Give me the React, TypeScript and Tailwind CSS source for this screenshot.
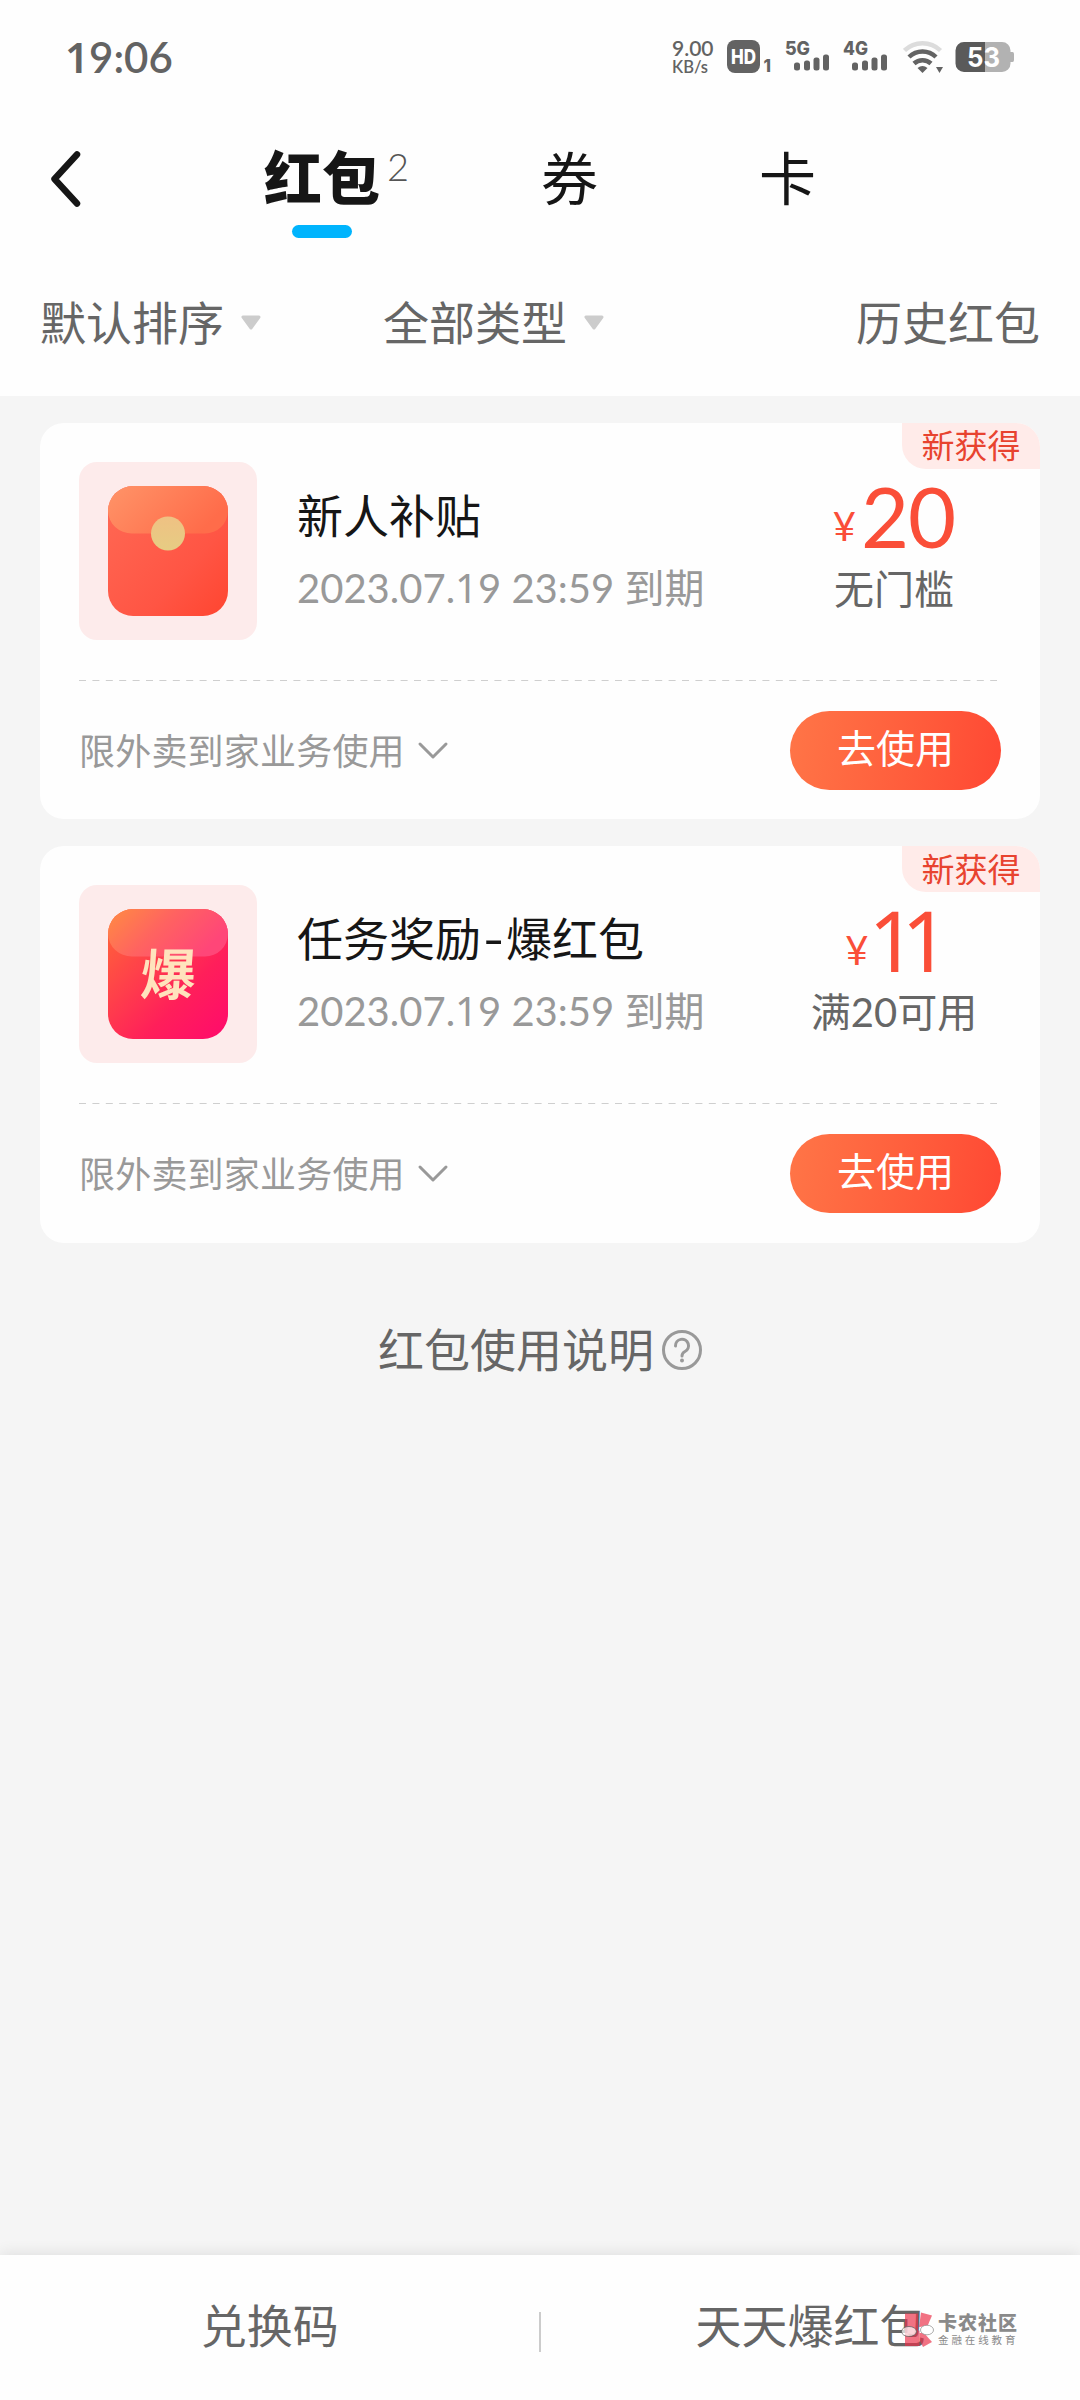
import { Fragment, type ReactNode } from "react";

type Coupon = {
  id: number;
  kind: "normal" | "burst";
  title: string;
  expires: string;
  amount: string;
  condition: string;
  scope: string;
};

const coupons: Coupon[] = [
  {
    id: 1,
    kind: "normal",
    title: "新人补贴",
    expires: "2023.07.19 23:59 到期",
    amount: "20",
    condition: "无门槛",
    scope: "限外卖到家业务使用",
  },
  {
    id: 2,
    kind: "burst",
    title: "任务奖励-爆红包",
    expires: "2023.07.19 23:59 到期",
    amount: "11",
    condition: "满20可用",
    scope: "限外卖到家业务使用",
  },
];

// Lato's "1" has a foot, so the ones are set in Noto Sans
function Digits({ text }: { text: string }) {
  const parts = text.split("1");
  return (
    <>
      {parts.map((part, i) => (
        <Fragment key={i}>
          {i > 0 ? <span className="font-['Noto_Sans']">1</span> : null}
          {part}
        </Fragment>
      ))}
    </>
  );
}

function Signal({ label }: { label: string }) {
  return (
    <svg className="overflow-visible" width="46" height="34" viewBox="0 0 46 34" fill="#636363">
      <text x="-1" y="15" fontSize="18.500" fontWeight="800" fontFamily="Inter" textLength="25" lengthAdjust="spacingAndGlyphs">
        {label}
      </text>
      <rect x="8" y="22.500" width="6" height="8" rx="2.500" />
      <rect x="18" y="20.500" width="6" height="10" rx="2.500" />
      <rect x="27.500" y="17.500" width="6" height="13" rx="2.500" />
      <rect x="37" y="14.500" width="6" height="16" rx="2.500" />
    </svg>
  );
}

function StatusBar() {
  return (
    <div className="flex h-[114px] items-center justify-between px-[65px] text-[#636363]">
      <span className="text-[42px] font-semibold leading-[50px]">
        <Digits text="19:06" />
      </span>
      <div className="flex items-center">
        <div className="flex w-[55px] flex-col">
          <span className="text-[21px] font-semibold leading-[20px]">9.00</span>
          <span className="text-[16.500px] font-semibold leading-[18px]">KB/s</span>
        </div>
        <svg className="mr-[15px] overflow-visible" width="44" height="34" viewBox="0 0 44 34" fill="#636363">
          <rect x="0" y="0" width="33" height="33" rx="8" />
          <text x="4" y="24" fontSize="20" fontWeight="800" fontFamily="Inter" fill="#fff" textLength="25" lengthAdjust="spacingAndGlyphs">
            HD
          </text>
          <text x="36.500" y="32" fontSize="17" fontWeight="800" fontFamily="Inter">
            1
          </text>
        </svg>
        <div className="mr-[12px]">
          <Signal label="5G" />
        </div>
        <div className="mr-[13px]">
          <Signal label="4G" />
        </div>
        <svg className="mr-[12px]" width="40" height="34" viewBox="0 0 40 34" fill="none" strokeWidth="4.500">
          <path d="M1.500 10.500a26 26 0 0 1 36 0" stroke="#dcdcdc" />
          <path d="M6 17a19.500 19.500 0 0 1 27 0" stroke="#636363" />
          <path d="M11 23.500a12.500 12.500 0 0 1 17 0" stroke="#636363" />
          <path d="M14.500 28q5-4 10 0l-5 5z" fill="#636363" />
          <path d="M33 27h7l-3.500 6z" fill="#636363" />
        </svg>
        <svg width="60" height="32" viewBox="0 0 60 32">
          <path d="M9 1h21v30H9a8.500 8.500 0 0 1-8.500-8.500v-13A8.500 8.500 0 0 1 9 1z" fill="#5a5a5a" />
          <path d="M30 1h17a8.500 8.500 0 0 1 8.500 8.500v1.500h2q1.500 0 1.500 2v6q0 2-1.500 2h-2v1.500A8.500 8.500 0 0 1 47 31H30z" fill="#b2b2b2" />
          <text x="12" y="26" fontSize="27" fontWeight="700" fontFamily="Inter" fill="#fff" textLength="33" lengthAdjust="spacingAndGlyphs">
            53
          </text>
        </svg>
      </div>
    </div>
  );
}

function Header() {
  return (
    <header className="flex h-[136px] pl-[48px] text-[57px] leading-none text-[#161616]">
      <button className="mt-[35px] h-[60px] w-[36px]">
        <svg width="36" height="60" viewBox="0 0 36 60" fill="none" stroke="#161616" strokeWidth="6.500" strokeLinecap="round" strokeLinejoin="round">
          <path d="M29 5.500L6.500 30 29 54.500" />
        </svg>
      </button>
      <div className="ml-[180px] mt-[34px] w-[116px]">
        <div className="relative text-[58px] font-black leading-[60px]">
          红包
          <span className="absolute left-[123px] top-[-12px] text-[38px] font-light leading-[60px] text-[#555]">2</span>
        </div>
        <div className="mx-auto mt-[17px] h-[13px] w-[60px] rounded-full bg-[#00b4fd]" />
      </div>
      <span className="ml-[161px] mt-[34px] leading-[60px]">券</span>
      <span className="ml-[161px] mt-[34px] leading-[60px]">卡</span>
    </header>
  );
}

function Caret() {
  return (
    <svg className="ml-[17px]" width="20" height="16" viewBox="0 0 20 16" fill="#ccc" stroke="#ccc" strokeWidth="3" strokeLinejoin="round">
      <path d="M2 2h16L10 13z" />
    </svg>
  );
}

function Filters() {
  return (
    <div className="flex h-[146px] items-center justify-between px-[40px] text-[46px] leading-none text-[#666]">
      <div className="flex items-center">
        <button className="flex items-center">
          默认排序
          <Caret />
        </button>
        <button className="ml-[122px] flex items-center">
          全部类型
          <Caret />
        </button>
      </div>
      <button>历史红包</button>
    </div>
  );
}

function EnvelopeIcon({ kind }: { kind: Coupon["kind"] }) {
  const burst = kind === "burst";
  return (
    <div className="flex h-[178px] w-[178px] shrink-0 items-center justify-center rounded-[18px] bg-[#fdebeb]">
      <svg width="120" height="130" viewBox="0 0 120 130">
        <defs>
          <linearGradient id={`body-${kind}`} x1="0" y1="0" x2="1" y2="1">
            <stop offset="0" stopColor={burst ? "#ff6a36" : "#ff6a55"} />
            <stop offset="0.65" stopColor={burst ? "#ff1f5a" : "#ff5544"} />
            <stop offset="1" stopColor={burst ? "#ff0a6c" : "#ff4530"} />
          </linearGradient>
          <linearGradient id={`flap-${kind}`} x1="0" y1="0" x2="1" y2="0.4">
            <stop offset="0" stopColor={burst ? "#ff8c42" : "#ff9468"} />
            <stop offset="0.5" stopColor={burst ? "#ff6360" : "#ff8059"} />
            <stop offset="1" stopColor={burst ? "#ff4678" : "#ff6c4a"} />
          </linearGradient>
          <linearGradient id="coin" x1="0" y1="0" x2="0" y2="1">
            <stop offset="0" stopColor="#efc183" />
            <stop offset="1" stopColor="#e6cc83" />
          </linearGradient>
        </defs>
        <rect width="120" height="130" rx="25" fill={`url(#body-${kind})`} />
        <path d="M0 25A25 25 0 0 1 25 0H95a25 25 0 0 1 25 25A23 23 0 0 1 97 47.500H24A24 23 0 0 1 0 25z" fill={`url(#flap-${kind})`} />
        {burst ? (
          <text
            x="60"
            y="86"
            fontSize="55"
            fontWeight="700"
            fill="#ffe3bd"
            textAnchor="middle"
            transform="skewX(-4) translate(5 0)"
          >
            爆
          </text>
        ) : (
          <circle cx="60" cy="47.500" r="17" fill="url(#coin)" />
        )}
      </svg>
    </div>
  );
}

function CouponTitle({ title }: { title: string }) {
  const [head, tail] = title.split("-");
  return (
    <h2 className="mt-[29px] text-[46px] leading-[50px] text-[#161616]">
      {head}
      {tail ? (
        <>
          <span className="inline-block w-[25px] scale-x-130 text-center">-</span>
          {tail}
        </>
      ) : null}
    </h2>
  );
}

function CouponCard({ coupon }: { coupon: Coupon }) {
  return (
    <li className="relative h-[396.500px] overflow-hidden rounded-[24px] bg-[#fefefe] px-[39px]">
      <span className="absolute right-0 top-0 flex h-[46px] w-[138px] items-center justify-center rounded-bl-[24px] bg-[#ffebe9] text-[33px] leading-none text-[#e8432f]">
        新获得
      </span>
      <div className="flex h-[257px] pt-[39px]">
        <EnvelopeIcon kind={coupon.kind} />
        <div className="ml-[40px] flex-1 whitespace-nowrap">
          <CouponTitle title={coupon.title} />
          <p className="mt-[24px] text-[40px] leading-[46px] text-[#999]">
            <Digits text={coupon.expires} />
          </p>
        </div>
        <div className="mr-[2px] flex w-[210px] flex-col items-center whitespace-nowrap">
          <div className="mt-[13px] flex h-[84px] items-baseline text-[#fa4e38]">
            <span className="relative -top-[7px] mr-[5px] text-[40px] leading-none">¥</span>
            {coupon.amount === "11" ? (
              <span className="-ml-[5px] mr-[8px] font-['Noto_Sans'] text-[84px] leading-[83px] tracking-[-15px]">{coupon.amount}</span>
            ) : (
              <span className="text-[83px] leading-[83px] tracking-[-1px]">{coupon.amount}</span>
            )}
          </div>
          <p className="mt-[7px] text-[40px] leading-[46px] text-[#666]">{coupon.condition}</p>
        </div>
      </div>
      <svg className="block" width="922" height="2" viewBox="0 0 922 2">
        <path d="M0 0.500H918" stroke="#cfcfcf" strokeWidth="1" strokeDasharray="7 6.400" />
      </svg>
      <div className="flex items-start justify-between pt-[29px]">
        <button className="flex h-[79px] items-center pt-[1px] text-[36px] leading-none tracking-[0.200px] text-[#999]">
          {coupon.scope}
          <svg className="ml-[12px]" width="32" height="20" viewBox="0 0 32 20" fill="none" stroke="#999" strokeWidth="3" strokeLinecap="round" strokeLinejoin="round">
            <path d="M3 3l13 13L29 3" />
          </svg>
        </button>
        <button className="h-[79px] w-[211px] rounded-full bg-linear-100 from-[#ff7547] to-[#ff4733] pb-[4px] text-[39px] leading-none text-white">
          去使用
        </button>
      </div>
    </li>
  );
}

function FooterTab({ children }: { children: ReactNode }) {
  return <button className="flex-1 text-[46px] leading-none text-[#666]">{children}</button>;
}

function Watermark() {
  return (
    <div className="absolute left-[900px] top-[57px] flex">
      <svg width="34" height="36" viewBox="0 0 34 36">
        <g fill="#ea2f48" fillOpacity="0.68">
          <path d="M5 1.500h13v17h1.500V34H5z" />
          <path d="M21 0.500l11 3-4.500 10.500-8.500 1z" />
          <path d="M19.500 21h4.500l8 9-9 5-3.500-7z" />
        </g>
        <ellipse cx="9" cy="19.500" rx="7.500" ry="5" fill="#fff" fillOpacity="0.7" stroke="#555" strokeWidth="0.700" />
        <ellipse cx="27" cy="18" rx="6.500" ry="4.800" fill="#fff" stroke="#888" strokeWidth="0.700" />
      </svg>
      <div className="ml-[4px] whitespace-nowrap text-[#8a8a8a]">
        <div className="text-[19px] font-black leading-[22px] tracking-[1px]">卡农社区</div>
        <div className="text-[10.500px] leading-[13px] tracking-[2.900px]">金融在线教育</div>
      </div>
    </div>
  );
}

export default function App() {
  return (
    <div className="flex h-[2400px] w-[1080px] flex-col bg-[#f5f5f5] font-[Lato,'Noto_Sans_CJK_SC',sans-serif]">
      <div className="h-[396px] bg-[#fefefe]">
        <StatusBar />
        <Header />
        <Filters />
      </div>

      <ul className="flex flex-col gap-[27px] px-[40px] pt-[26.500px]">
        {coupons.map((coupon) => (
          <CouponCard key={coupon.id} coupon={coupon} />
        ))}
      </ul>

      <button className="mt-[79px] flex items-center justify-center pl-[1px] text-[46px] leading-[56px] text-[#666]">
        红包使用说明
        <svg className="ml-[7px]" width="42" height="42" viewBox="0 0 42 42" fill="none" stroke="#999" strokeWidth="3">
          <circle cx="21" cy="21" r="18.500" />
          <path d="M14.500 17a6.500 6.500 0 1 1 9.500 5.500q-3 1.500-3 4.500" strokeLinecap="round" />
          <circle cx="21" cy="31.500" r="2" fill="#999" stroke="none" />
        </svg>
      </button>

      <footer className="relative mt-auto flex h-[145px] items-center bg-[#fefefe] pb-[4px] shadow-[0_-2px_14px_rgba(0,0,0,0.09)]">
        <FooterTab>兑换码</FooterTab>
        <div className="mt-[13px] h-[40px] w-[1.500px] bg-[#ccc]" />
        <FooterTab>天天爆红包</FooterTab>
        <Watermark />
      </footer>
    </div>
  );
}
